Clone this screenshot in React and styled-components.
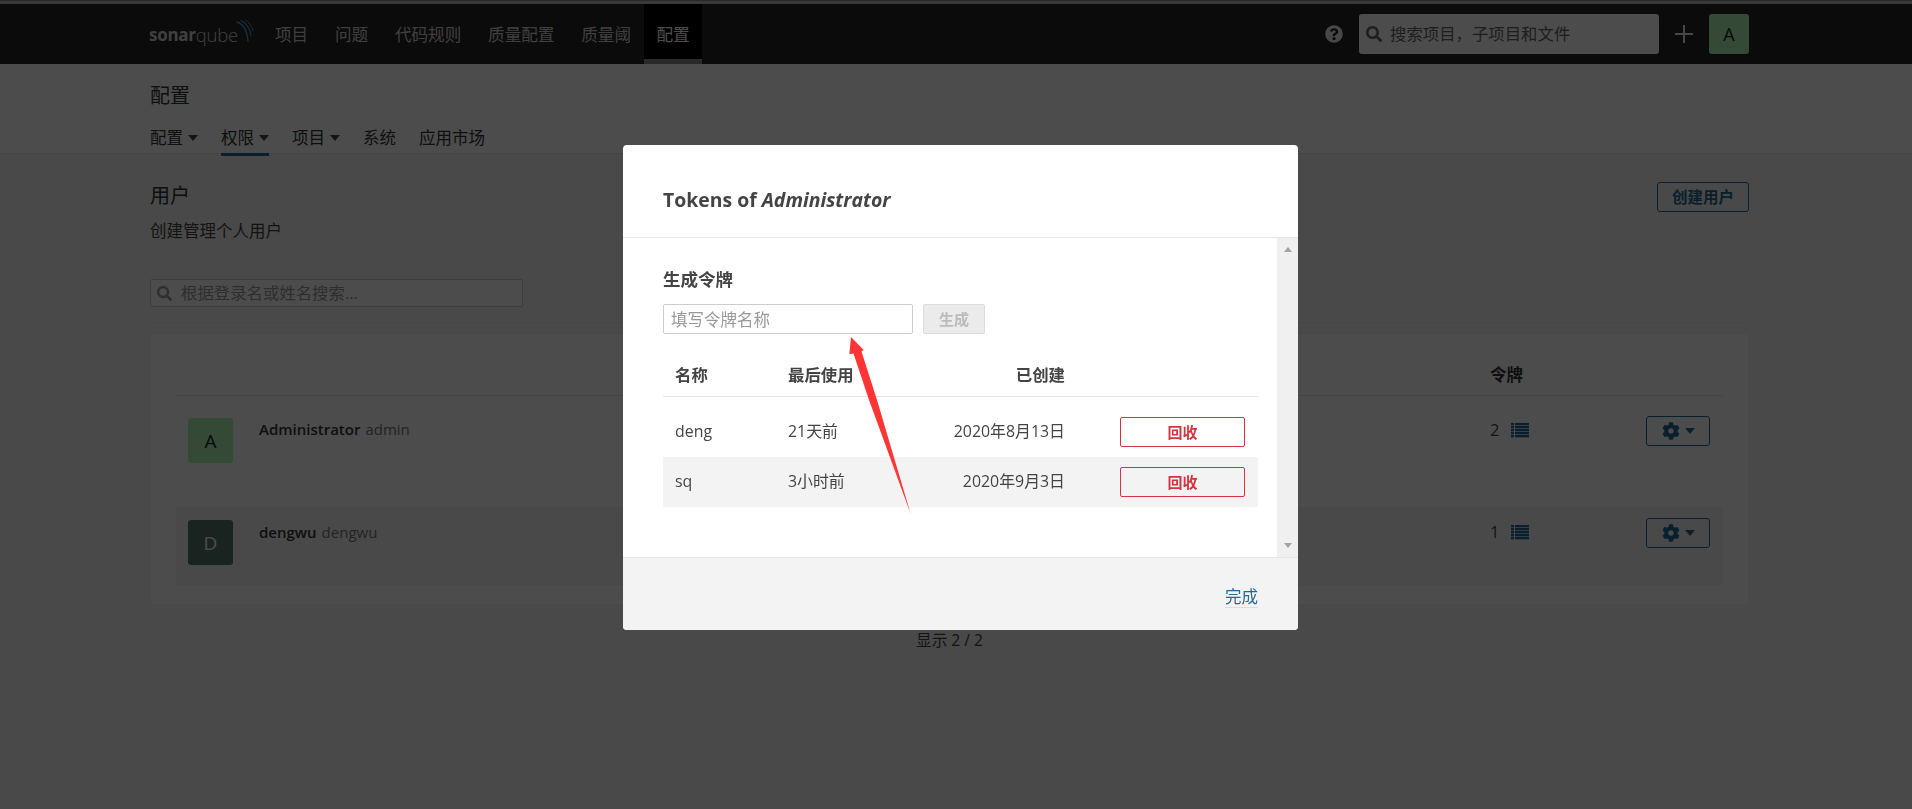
import React from "react";
import styled, { createGlobalStyle } from "styled-components";
import { FaCog, FaQuestionCircle, FaSearch } from "react-icons/fa";

const Global = createGlobalStyle`
  html, body { margin: 0; padding: 0; height: 100%; background: #f3f3f3; overflow: hidden; }
  body { font-family: "Open Sans", "Noto Sans CJK SC", sans-serif; font-size: 16.5px; line-height: 24px; color: #444; }
  * { box-sizing: border-box; }
`;

const Page = styled.div`display: flex; flex-direction: column; min-height: 809px;`;
const TopStrip = styled.div`height: 4px; background: #c4c4c4; border-top: 1px solid #8a8a8a;`;
const NavBar = styled.nav`
  height: 60px; background: #262626; color: #ddd;
  display: flex; align-items: flex-start; padding: 0 163px 0 149px;
`;
const Logo = styled.div`
  display: flex; align-items: flex-start; width: 112.6px; height: 60px; padding-top: 18px; color: #d4d4d4;
  font-family: "Open Sans", sans-serif; line-height: 26px;
`;
const LogoBold = styled.span`font-size: 17px; font-weight: 700; letter-spacing: -0.3px;`;
const LogoLight = styled.span`font-size: 18.5px; font-weight: 300; letter-spacing: -0.2px;`;
const LogoArcs = styled.svg`width: 18px; height: 24px; margin: -3px 0 0 -2px; flex: none;`;
const NavItem = styled.a`
  height: 60px; padding: 0 ${p => (p.$active ? "12px" : "13.4px")}; line-height: 62px; font-size: 16.6px; color: #d2d2d2; white-space: nowrap;
  border-bottom: 5px solid ${p => (p.$active ? "#8c8c8c" : "transparent")};
  background: ${p => (p.$active ? "#000" : "transparent")};
  ${p => p.$active && "color: #fff;"}
`;
const NavRight = styled.div`margin-left: auto; display: flex; align-items: center; height: 60px;`;
const HelpIcon = styled(FaQuestionCircle)`font-size: 18px; color: #eee; margin-right: 16px;`;
const GlobalSearch = styled.div`
  width: 300px; height: 40px; background: #fff; border-radius: 3px; display: flex; align-items: center;
  padding-left: 7px; gap: 8px; color: #666; font-size: 16.4px;
`;
const PlusIcon = styled.svg`width: 18px; height: 18px; margin: 0 16px; flex: none;`;
const Avatar = styled.div`
  width: ${p => p.$size}px; height: ${p => p.$size}px; border-radius: 3px; flex: none;
  background: ${p => p.$bg}; color: ${p => p.$fg};
  display: flex; align-items: center; justify-content: center; font-size: ${p => p.$font}px;
`;

const PageHeader = styled.header`
  height: 90px; background: #fff; border-bottom: 1px solid #e6e6e6; padding: 17px 0 0 150px;
`;
const PageTitle = styled.h1`margin: 0; font-size: 20px; line-height: 30px; font-weight: 400; color: #333;`;
const SubNav = styled.div`display: flex; margin-top: 15px; gap: 23px;`;
const SubItem = styled.a`
  display: flex; align-items: center; gap: 5px; height: 30px; padding: 0 0 4px; color: #333;
  border-bottom: 3px solid ${p => (p.$active ? "#236a97" : "transparent")};
  margin-bottom: -1px; line-height: 24px;
`;
const Caret = styled.i`
  width: 0; height: 0; border-left: 5px solid transparent; border-right: 5px solid transparent;
  border-top: 6px solid ${p => p.$color || "#444"}; display: block;
`;

const Main = styled.main`padding: 27px 163px 0 150px; flex: 1;`;
const TitleRow = styled.div`display: flex; justify-content: space-between; align-items: flex-start;`;
const TitleLeft = styled.div`display: flex; flex-direction: column;`;
const SectionTitle = styled.h2`margin: 0 0 8px; font-size: 20px; line-height: 30px; font-weight: 400; color: #333;`;
const SectionDesc = styled.p`margin: 0; color: #444;`;
const OutlineButton = styled.button`
  width: 92px; height: 30px; margin-top: 1px; padding: 0; background: transparent; border: 1px solid #236a97; border-radius: 3px;
  color: #236a97; font: 600 15.5px/28px "Open Sans", "Noto Sans CJK SC", sans-serif;
`;
const SearchBar = styled.div`margin-top: 36px; padding-bottom: 15px; border-bottom: 1px solid #ebebeb;`;
const SearchField = styled.div`
  width: 373px; height: 28px; border: 1px solid #cdcdcd; border-radius: 2px; background: #fff;
  display: flex; align-items: center; gap: 9px; padding-left: 6px; color: #999; font-size: 16.4px;
`;
const Card = styled.section`
  margin-top: 10px; background: #fff; border: 1px solid #f0f0f0; padding: 0 25px 19px 25px;
`;
const UserGrid = styled.div`
  display: grid; grid-template-columns: 71px 1fr 156px 64px; padding: 0 13px 0 12px;
`;
const CardHead = styled(UserGrid)`height: 62px; border-bottom: 1px solid #e6e6e6; align-items: center; padding-top: 21px; color: #333; font-weight: 600;`;
const UserRow = styled(UserGrid)`
  padding-top: ${p => (p.$first ? 22 : 13)}px; height: ${p => (p.$first ? 111 : 78)}px;
  background: ${p => (p.$first ? "transparent" : "#f6f6f6")};
`;
const Name = styled.div`white-space: nowrap; font-size: 15px; margin-top: ${p => (p.$first ? "-1px" : "0")};`;
const NameBold = styled.b`font-weight: 600; color: #333; margin-right: 5px;`;
const Login = styled.span`color: #777;`;
const TokenCell = styled.div`display: flex; gap: 12px; height: 24px; align-items: center; color: #444;`;
const ListIcon = styled.svg`width: 18px; height: 15px; flex: none;`;
const GearButton = styled.button`
  width: 64px; height: 30px; margin-top: -2px; padding: 0; background: transparent; border: 1px solid #236a97; border-radius: 3px;
  display: flex; align-items: center; justify-content: center; gap: 5px; color: #236a97;
`;
const GearIcon = styled(FaCog)`font-size: 18px;`;
const Footnote = styled.div`margin-top: 23px; text-align: center; color: #444; font-size: 15.6px;`;

const Overlay = styled.div`position: fixed; inset: 0; background: rgba(0, 0, 0, 0.7);`;
const Modal = styled.div`
  position: fixed; left: 623px; top: 145px; width: 675px; height: 485px; background: #fff; border-radius: 4px;
  display: flex; flex-direction: column; overflow: hidden;
`;
const ModalHead = styled.header`
  height: 93px; flex: none; border-bottom: 1px solid #e6e6e6; padding: 41px 40px 0;
  font-size: 19.4px; line-height: 28px; font-weight: 700; color: #444;
`;
const ModalBody = styled.div`flex: 1; display: flex; min-height: 0;`;
const ModalContent = styled.div`flex: 1; padding: 29px 19px 0 40px;`;
const Scrollbar = styled.div`
  width: 21px; flex: none; background: #f0f0f0; display: flex; flex-direction: column; justify-content: space-between;
  align-items: center; padding: 9px 0;
`;
const ScrollArrow = styled.i`
  width: 0; height: 0; border-left: 4.5px solid transparent; border-right: 4.5px solid transparent; display: block;
  ${p => (p.$down ? "border-top: 5px solid #a3a3a3;" : "border-bottom: 5px solid #a3a3a3;")}
`;
const SubTitle = styled.h3`margin: 0 0 13px; font-size: 17.5px; line-height: 24px; font-weight: 700; color: #444;`;
const FormRow = styled.div`display: flex; gap: 10px;`;
const TokenInput = styled.input`
  width: 250px; height: 30px; padding: 0 7px; border: 1px solid #cdcdcd; border-radius: 2px;
  font: 16.5px/28px "Open Sans", "Noto Sans CJK SC", sans-serif; color: #444; background: #fff;
  &::placeholder { color: #999; opacity: 1; }
`;
const GenerateButton = styled.button`
  width: 62px; height: 30px; padding: 0; background: #ebebeb; border: 1px solid #dcdcdc; border-radius: 2px; color: #bbb;
  font: 600 15px/28px "Open Sans", "Noto Sans CJK SC", sans-serif;
`;
const TokenTable = styled.table`
  width: 595px; margin-top: 20px; border-collapse: collapse; table-layout: fixed;
`;
const Th = styled.th`
  height: 42px; padding: 0 ${p => (p.$right ? "13px" : "0")} 0 ${p => (p.$right ? "0" : "12px")};
  width: ${p => p.$w}px; font-weight: 600; font-size: 16.4px; color: #444;
  text-align: ${p => (p.$right ? "right" : "left")}; border-bottom: 1px solid #e6e6e6;
`;
const Tr = styled.tr`background: ${p => (p.$striped ? "#f3f3f3" : "transparent")};`;
const Td = styled.td`
  height: ${p => (p.$first ? 60 : 50)}px; padding: ${p => (p.$first ? "19px" : "9px")} ${p => (p.$right ? "13px" : "0")} 11px ${p => (p.$right ? "0" : "12px")};
  text-align: ${p => (p.$right ? "right" : "left")}; font-size: 15.9px; color: #444; white-space: nowrap;
`;
const ActionTd = styled.td`
  height: ${p => (p.$first ? 60 : 50)}px; padding: ${p => (p.$first ? "20px" : "10px")} 13px 10px 0; text-align: right;
`;
const RevokeButton = styled.button`
  width: 125px; height: 30px; padding: 0; background: transparent; border: 1px solid #d4333f; border-radius: 2px; display: inline-block; vertical-align: top;
  color: #d4333f; font: 600 15px/28px "Open Sans", "Noto Sans CJK SC", sans-serif;
`;
const ModalFoot = styled.footer`
  height: 73px; flex: none; background: #f3f3f3; border-top: 1px solid #e6e6e6; padding: 27px 40px 0; text-align: right;
`;
const DoneLink = styled.a`color: #236a97; border-bottom: 1px solid #cae3f2; font-size: 16.5px; line-height: 20px; display: inline-block;`;
const Arrow = styled.svg`position: fixed; left: 0; top: 0; width: 1912px; height: 809px; pointer-events: none;`;

const navItems = ["项目", "问题", "代码规则", "质量配置", "质量阈"];
const subItems = [
  { label: "配置", caret: true },
  { label: "权限", caret: true, active: true },
  { label: "项目", caret: true },
  { label: "系统" },
  { label: "应用市场" },
];
const users = [
  { initial: "A", name: "Administrator", login: "admin", tokens: 2, bg: "#b1f5b7", fg: "#222", first: true },
  { initial: "D", name: "dengwu", login: "dengwu", tokens: 1, bg: "#557a70", fg: "#fff" },
];
const tokens = [
  { name: "deng", used: "21天前", created: "2020年8月13日", first: true },
  { name: "sq", used: "3小时前", created: "2020年9月3日", striped: true },
];
const listRows = [0, 3, 6, 9, 12];

export default function App() {
  return (
    <>
      <Global />
      <Page>
        <TopStrip />
        <NavBar>
          <Logo>
            <LogoBold>sonar</LogoBold>
            <LogoLight>qube</LogoLight>
            <LogoArcs viewBox="0 0 18 24" fill="none" stroke="#4b9fd5" strokeLinecap="round">
              <path d="M1 3 C7 5 11 11 12 22" strokeWidth="1.4" />
              <path d="M5 1.5 C10 4 14 9 15 17" strokeWidth="1.1" />
              <path d="M9 .8 C13 3 16 7 17 12" strokeWidth="0.9" />
            </LogoArcs>
          </Logo>
          {navItems.map(n => <NavItem key={n}>{n}</NavItem>)}
          <NavItem $active>配置</NavItem>
          <NavRight>
            <HelpIcon />
            <GlobalSearch><FaSearch size={16} />搜索项目，子项目和文件</GlobalSearch>
            <PlusIcon viewBox="0 0 18 18"><path d="M8 0h2v8h8v2h-8v8H8v-8H0V8h8z" fill="#eee" /></PlusIcon>
            <Avatar $size={40} $bg="#b1f5b7" $fg="#222" $font={18}>A</Avatar>
          </NavRight>
        </NavBar>
        <PageHeader>
          <PageTitle>配置</PageTitle>
          <SubNav>
            {subItems.map(s => (
              <SubItem key={s.label} $active={s.active}>{s.label}{s.caret && <Caret />}</SubItem>
            ))}
          </SubNav>
        </PageHeader>
        <Main>
          <TitleRow>
            <TitleLeft>
              <SectionTitle>用户</SectionTitle>
              <SectionDesc>创建管理个人用户</SectionDesc>
            </TitleLeft>
            <OutlineButton>创建用户</OutlineButton>
          </TitleRow>
          <SearchBar>
            <SearchField><FaSearch size={15} />根据登录名或姓名搜索...</SearchField>
          </SearchBar>
          <Card>
            <CardHead><span /><span /><span>令牌</span><span /></CardHead>
            {users.map(u => (
              <UserRow key={u.initial} $first={u.first}>
                <Avatar $size={45} $bg={u.bg} $fg={u.fg} $font={19}>{u.initial}</Avatar>
                <Name $first={u.first}><NameBold>{u.name}</NameBold><Login>{u.login}</Login></Name>
                <TokenCell>
                  {u.tokens}
                  <ListIcon viewBox="0 0 18 15" fill="#236a97">
                    {listRows.map(y => (
                      <g key={y}><rect x="0" y={y} width="3" height="2.3" /><rect x="4" y={y} width="14" height="2.3" /></g>
                    ))}
                  </ListIcon>
                </TokenCell>
                <GearButton><GearIcon /><Caret $color="#236a97" /></GearButton>
              </UserRow>
            ))}
          </Card>
          <Footnote>显示 2 / 2</Footnote>
        </Main>
      </Page>
      <Overlay />
      <Modal>
        <ModalHead>Tokens of <em>Administrator</em></ModalHead>
        <ModalBody>
          <ModalContent>
            <SubTitle>生成令牌</SubTitle>
            <FormRow>
              <TokenInput placeholder="填写令牌名称" readOnly />
              <GenerateButton disabled>生成</GenerateButton>
            </FormRow>
            <TokenTable>
              <thead>
                <tr>
                  <Th $w={113}>名称</Th>
                  <Th $w={150}>最后使用</Th>
                  <Th $w={152} $right>已创建</Th>
                  <Th $w={180} />
                </tr>
              </thead>
              <tbody>
                {tokens.map(t => (
                  <Tr key={t.name} $striped={t.striped}>
                    <Td $first={t.first}>{t.name}</Td>
                    <Td $first={t.first}>{t.used}</Td>
                    <Td $first={t.first} $right>{t.created}</Td>
                    <ActionTd $first={t.first}><RevokeButton>回收</RevokeButton></ActionTd>
                  </Tr>
                ))}
              </tbody>
            </TokenTable>
          </ModalContent>
          <Scrollbar><ScrollArrow /><ScrollArrow $down /></Scrollbar>
        </ModalBody>
        <ModalFoot><DoneLink>完成</DoneLink></ModalFoot>
      </Modal>
      <Arrow viewBox="0 0 1912 809">
        <polygon points="851,337 863.7,350 861.5,351.5 877,400 910.7,514 869,400 853.5,353.5 849.3,354.3" fill="#ff3535" />
      </Arrow>
    </>
  );
}
